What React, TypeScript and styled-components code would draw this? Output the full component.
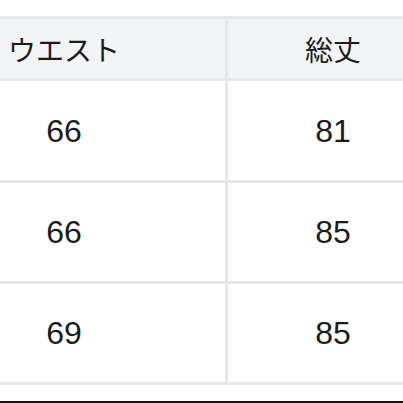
import React from "react";
import styled, { createGlobalStyle } from "styled-components";

const Global = createGlobalStyle`
  html, body { margin: 0; padding: 0; background: #ffffff; }
  #root { width: 403px; height: 403px; }
`;

const Frame = styled.div`
  width: 403px;
  height: 403px;
  overflow: hidden;
  background: #ffffff;
  display: flex;
  flex-direction: column;
`;

const Table = styled.div`
  margin-top: 16px;
  margin-left: -97px;
  width: 538px;
  display: grid;
  grid-template-columns: 322px 210px;
  grid-template-rows: 59px 99px 98px 98px;
  gap: 3px;
  padding: 3px 0;
  background: #e8e8e9;
`;

const Cell = styled.div<{ $head?: boolean }>`
  display: flex;
  align-items: center;
  justify-content: center;
  background: ${(p) => (p.$head ? "#f3f4f6" : "#ffffff")};
  color: #1c1c1c;
  font-family: ${(p) =>
    p.$head
      ? '"Noto Sans CJK JP", "Noto Sans", sans-serif'
      : '"Liberation Sans", Arial, sans-serif'};
  font-size: ${(p) => (p.$head ? "28px" : "32px")};
  font-weight: 400;
  line-height: 1;
`;

const Spacer = styled.div`
  flex: 1;
`;

const BottomBar = styled.div`
  height: 2px;
  background: #111111;
`;

const rows = [
  ["66", "81"],
  ["66", "85"],
  ["69", "85"],
];

export default function App() {
  return (
    <>
      <Global />
      <Frame>
        <Table>
          <Cell $head>ウエスト</Cell>
          <Cell $head>総丈</Cell>
          {rows.map((r, i) => (
            <React.Fragment key={i}>
              <Cell>{r[0]}</Cell>
              <Cell>{r[1]}</Cell>
            </React.Fragment>
          ))}
        </Table>
        <Spacer />
        <BottomBar />
      </Frame>
    </>
  );
}
